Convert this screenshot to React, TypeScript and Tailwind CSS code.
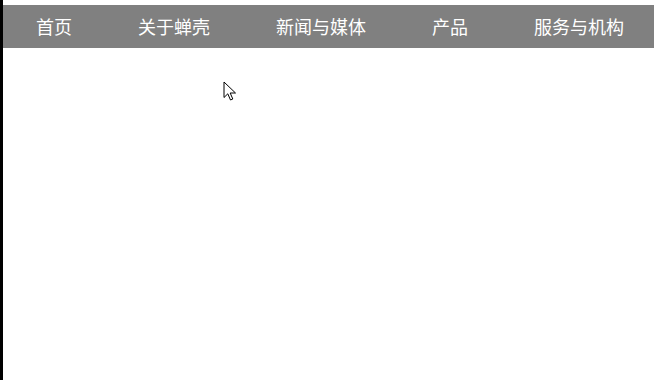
import React from 'react';

const navItems = ['首页', '关于蝉壳', '新闻与媒体', '产品', '服务与机构'];

const App: React.FC = () => {
  return (
    <div className="relative flex h-[380px] w-[654px] overflow-hidden bg-white">
      {/* left edge strip */}
      <div className="w-[3px] shrink-0 bg-black" />

      <div className="flex-1 pt-[5px]">
        <ul
          className="flex h-[43px] items-center bg-[#808080] text-[18px] text-white whitespace-nowrap"
          style={{ fontFamily: '"Microsoft YaHei", "Noto Sans CJK SC", sans-serif' }}
        >
          {navItems.map((item) => (
            <li key={item} className="shrink-0 px-[33px] leading-[43px]">
              {item}
            </li>
          ))}
        </ul>
      </div>

      {/* mouse pointer */}
      <svg
        className="absolute left-[223px] top-[81px]"
        width="15"
        height="21"
        viewBox="0 0 15 21"
      >
        <path
          d="M1 1 L1 16.5 L4.8 12.8 L7.5 19 L9.8 18 L7.2 12 L12.5 12 Z"
          fill="#fff"
          stroke="#000"
          strokeWidth="1"
          strokeLinejoin="miter"
        />
      </svg>
    </div>
  );
};

export default App;
